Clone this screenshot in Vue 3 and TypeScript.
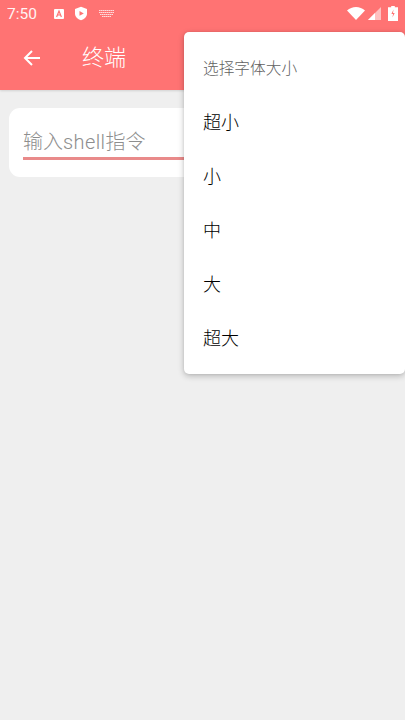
<script setup lang="ts">
const sizes: string[] = ['超小', '小', '中', '大', '超大']
</script>

<template>
  <div class="screen">
    <header class="appbar">
      <div class="status">
        <span class="time">7:50</span>
        <svg class="ic" width="12" height="12" viewBox="0 0 12 12"><rect x="1" y="1" width="10" height="10" rx="1" fill="#fff"/><path d="M3.600 9 6 3l2.400 6M4.500 7h3" fill="none" stroke="#ff7373" stroke-width="1.200"/></svg>
        <svg class="ic shield" width="14" height="15" viewBox="0 0 14 15"><path d="M7 .8 13 3v4.500c0 3.200-2.600 5.800-6 6.700C3.600 13.300 1 10.700 1 7.500V3z" fill="#fff"/><path d="M5.500 5v4.800L9.800 7.400z" fill="#ff7373"/></svg>
        <svg class="ic kb" width="15" height="10" viewBox="0 0 15 10"><path d="M0 1.500h15M0 3.500h15M1 5.500h13M3 7.500h9" stroke="#fff" stroke-opacity=".75" stroke-width="1" stroke-dasharray="1.600 .4"/></svg>
        <span class="spacer"></span>
        <svg width="18" height="13" viewBox="0 0 18 13"><path d="M0 3.600C5-1.100 13-1.100 18 3.600L9 13z" fill="#fff"/></svg>
        <svg class="signal" width="13" height="13" viewBox="0 0 13 13"><path d="M13 0v13H0z" fill="#fff" fill-opacity=".55"/><path d="M7 6v7H0z" fill="#fff"/></svg>
        <svg class="battery" width="10" height="15" viewBox="0 0 10 15"><path d="M3.200 0h3.600v1.200H10V15H0V1.200h3.200z" fill="#fff"/><path d="M5.500 3.500 3.400 8h1.700l-.7 3.500L6.700 7H5z" fill="#ff7373"/></svg>
      </div>
      <div class="toolbar">
        <svg class="back" width="20" height="20" viewBox="0 0 20 20"><path d="M18 10H3M10 3l-7 7 7 7" fill="none" stroke="#fff" stroke-width="2"/></svg>
        <span class="title">终端</span>
      </div>
    </header>

    <main class="content">
      <section class="card">
        <div class="field">输入<span class="latin">shell</span>指令</div>
      </section>
    </main>

    <div class="menu">
      <div class="menu-title">选择字体大小</div>
      <div v-for="size in sizes" :key="size" class="menu-item">{{ size }}</div>
    </div>
  </div>
</template>

<style>
html, body { margin: 0; padding: 0; }
</style>

<style scoped>
.screen {
  position: relative;
  width: 405px;
  height: 720px;
  overflow: hidden;
  background: #efefef;
  font-family: Roboto, "Noto Sans CJK SC", sans-serif;
  font-weight: 300;
}
.appbar {
  height: 90px;
  background: #ff7373;
  box-shadow: 0 1px 2px rgba(0, 0, 0, 0.12);
  color: #fff;
}
.status {
  height: 27px;
  display: flex;
  align-items: center;
  padding: 0 7px 0 7px;
  box-sizing: border-box;
}
.time { font-size: 15.500px; font-weight: 400; width: 46px; opacity: 0.92; }
.ic { flex: none; }
.shield { margin-left: 9px; }
.kb { margin-left: 11px; }
.spacer { flex: 1; }
.signal { margin-left: 3px; }
.battery { margin-left: 7px; }
.toolbar {
  height: 63px;
  display: flex;
  align-items: center;
  padding-left: 22px;
  padding-bottom: 1px;
  box-sizing: border-box;
}
.back { flex: none; }
.title { margin-left: 40px; font-size: 22px; line-height: 28px; }
.content { padding: 18px 9px; }
.card {
  height: 69px;
  background: #fff;
  border-radius: 11px;
  padding: 0 14px;
  box-sizing: border-box;
}
.field {
  height: 52px;
  padding-top: 20px;
  box-sizing: border-box;
  border-bottom: 3px solid #e98a8a;
  font-size: 20px;
  line-height: 28px;
  color: #8e8e8e;
}
.latin { letter-spacing: 0.4px; }
.menu {
  position: absolute;
  top: 32px;
  right: 0;
  width: 221px;
  height: 342px;
  padding-top: 8px;
  box-sizing: border-box;
  background: #fff;
  border-radius: 5px;
  box-shadow: 0 2px 6px rgba(0, 0, 0, 0.24), 0 0 3px rgba(0, 0, 0, 0.08);
}
.menu-title {
  height: 54px;
  padding: 0 19px;
  display: flex;
  align-items: center;
  font-size: 15.700px;
  color: #616161;
}
.menu-item {
  height: 54px;
  padding: 0 19px;
  display: flex;
  align-items: center;
  font-size: 18px;
  color: #000;
}
</style>
